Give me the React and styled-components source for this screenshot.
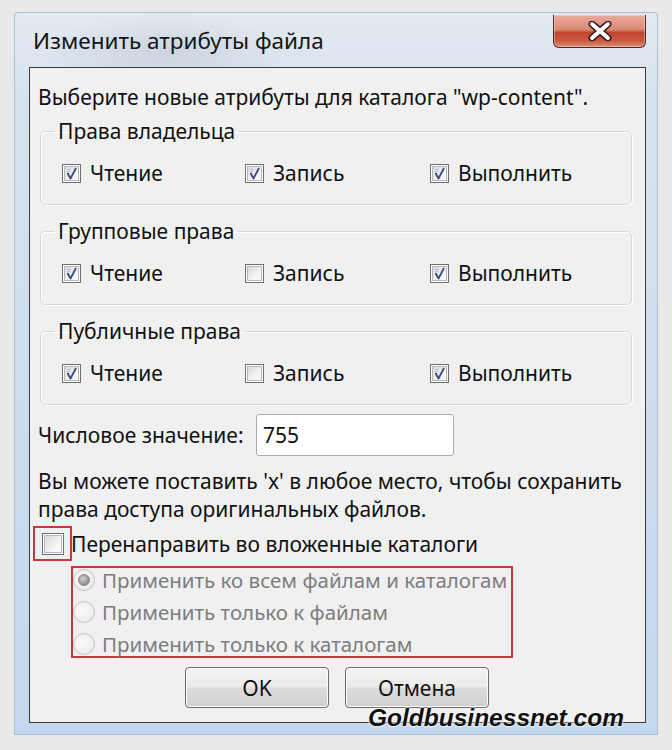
import React from "react";
import styled, {createGlobalStyle} from "styled-components";

const GlobalStyle = createGlobalStyle`
  body {
    margin: 0;
    background: #e9e9e9;
    font-family: "Noto Sans", "Open Sans", sans-serif;
    color: #111;
  }
`;

const Page = styled.div`
  width: 672px;
  height: 750px;
  padding: 12px 0 0 14px;
  box-sizing: border-box;
`;

const Window = styled.div`
  position: relative;
  width: 644px;
  height: 723px;
  box-sizing: border-box;
  border: 1px solid #aebfd1;
  border-radius: 4px 4px 0 0;
  padding-bottom: 11px;
  display: flex;
  flex-direction: column;
  background:
    radial-gradient(ellipse 120px 40px at 150px 40px, rgba(150, 160, 175, 0.25), transparent),
    linear-gradient(180deg, #e3e9f0 0%, #d6e2ee 12%, #c3d8ee 100%);
`;

const TitleBar = styled.div`
  height: 54px;
  display: flex;
  justify-content: space-between;
  align-items: flex-start;
`;

const Title = styled.div`
  padding: 14px 0 0 18px;
  font-size: 22.5px;
  line-height: 28px;
  color: #151515;
`;

const CloseButton = styled.div`
  margin: 2px 11px 0 0;
  width: 93px;
  height: 33px;
  box-sizing: border-box;
  border: 1px solid #4b2a26;
  border-top: none;
  border-radius: 0 0 6px 6px;
  display: flex;
  align-items: center;
  justify-content: center;
  background: linear-gradient(180deg, #e9ab9d 0%, #da8b77 45%, #c1452c 55%, #c9573f 80%, #dc8d75 100%);
  box-shadow: inset 0 0 0 1px rgba(255, 255, 255, 0.35);
`;

const Panel = styled.div`
  margin: 0 11px 0 14px;
  height: 656px;
  box-sizing: border-box;
  border: 1px solid #3b3b3b;
  background: #f0f0f0;
  display: flex;
  flex-direction: column;
  font-size: 21px;
`;

const Intro = styled.div`
  margin: 15px 0 0 8px;
  line-height: 28px;
`;

const Group = styled.fieldset`
  margin: ${p => p.$first ? "8px" : "14px"} 13px 0 10px;
  padding: 0 0 0 21px;
  border: 1px solid #d7d7d7;
  border-radius: 5px;
  box-shadow: inset 1px 1px 0 #fff, 1px 1px 0 #fff;
`;

const Legend = styled.legend`
  margin-left: -8px;
  padding: 0 4px;
  line-height: 24px;
  font-size: 21px;
`;

const Row = styled.div`
  margin: 18px 0 19px;
  height: 24px;
  display: grid;
  grid-template-columns: 183px 185px auto;
`;

const Option = styled.label`
  display: flex;
  align-items: center;
  gap: 9px;
  line-height: 24px;
`;

const Box = styled.span`
  width: 19px;
  height: 19px;
  flex: none;
  box-sizing: border-box;
  border: 1px solid #6f6f6f;
  padding: 1px;
  background: #fff;
  display: flex;

  & > span {
    flex: 1;
    display: flex;
    align-items: center;
    justify-content: center;
    border: 1px solid #b8b8b8;
    background: linear-gradient(135deg, #d9d9d9, #f7f7f7 70%);
  }
`;

const NumberRow = styled.div`
  margin: 9px 0 0 8px;
  height: 42px;
  display: grid;
  grid-template-columns: 218px 198px;
  align-items: center;
`;

const NumberInput = styled.div`
  height: 42px;
  box-sizing: border-box;
  border: 1px solid #a9abb2;
  border-radius: 3px;
  background: #fff;
  padding: 0 6px;
  line-height: 40px;
`;

const Hint = styled.div`
  margin: 11px 0 0 8px;
  line-height: 28px;
`;

const RedirectRow = styled.div`
  margin: 3px 0 0 3px;
  height: 35px;
  display: flex;
  align-items: center;
`;

const Marked = styled.div`
  width: 39px;
  height: 35px;
  box-sizing: border-box;
  border: 2px solid #c7393d;
  display: flex;
  align-items: center;
  justify-content: center;

  & > span {
    width: 22px;
    height: 22px;
  }
`;

const RedirectLabel = styled.span`
  margin-left: -1px;
  line-height: 28px;
`;

const RadioGroup = styled.div`
  margin: 5px 0 0 41px;
  width: 442px;
  height: 92px;
  box-sizing: border-box;
  border: 2px solid #c7393d;
  display: flex;
  flex-direction: column;
  gap: 8px;
`;

const RadioRow = styled.div`
  height: 24px;
  display: flex;
  align-items: center;
  gap: 7px;
  font-size: 20.5px;
  color: #7d7d7d;
  white-space: nowrap;
`;

const Radio = styled.span`
  width: 22px;
  height: 22px;
  flex: none;
  box-sizing: border-box;
  border-radius: 50%;
  border: 1px solid #c4c4c4;
  background: radial-gradient(circle at 40% 40%, #fbfbfb, #e6e6e6);
  display: flex;
  align-items: center;
  justify-content: center;

  &::after {
    content: "";
    width: 10px;
    height: 10px;
    border-radius: 50%;
    display: ${p => p.$on ? "block" : "none"};
    background: radial-gradient(circle at 40% 35%, #d0d0d0, #8f8f8f 70%);
    border: 1px solid #8a8a8a;
  }
`;

const Buttons = styled.div`
  margin: 9px 0 0 155px;
  display: flex;
  gap: 16px;
`;

const Button = styled.div`
  width: 144px;
  height: 41px;
  box-sizing: border-box;
  border: 1px solid #6d6d6d;
  border-radius: 4px;
  display: flex;
  align-items: center;
  justify-content: center;
  background: linear-gradient(180deg, #f3f3f3 0%, #ebebeb 48%, #dddddd 52%, #cfcfcf 100%);
  box-shadow: inset 0 0 0 1px #fcfcfc;
`;

const Watermark = styled.div`
  position: absolute;
  left: 353px;
  top: 690px;
  font-family: "Liberation Sans", Arial, sans-serif;
  font-weight: bold;
  font-style: italic;
  font-size: 24.5px;
  line-height: 30px;
  color: #111;
  text-shadow: 0 0 2px #fff, 0 0 2px #fff, 0 0 2px #fff;
`;

function Check({on}) {
    return (
        <Box>
            <span>
                {on && (
                    <svg width="13" height="13" viewBox="0 0 13 13">
                        <path d="M2 2.5 L6 2.5 M2 4.5 L5 4.5" stroke="#a8b0cf" strokeWidth="0.8"/>
                        <path d="M2.5 6 L5.5 11.5 L11 1" fill="none" stroke="#3c4a86" strokeWidth="1.8" strokeLinejoin="round"/>
                    </svg>
                )}
            </span>
        </Box>
    );
}

const groups = [
    {title: "Права владельца", values: [true, true, true]},
    {title: "Групповые права", values: [true, false, true]},
    {title: "Публичные права", values: [true, false, true]},
];

const labels = ["Чтение", "Запись", "Выполнить"];

export default function App() {
    return (
        <Page>
            <GlobalStyle/>
            <Window>
                <TitleBar>
                    <Title>Изменить атрибуты файла</Title>
                    <CloseButton>
                        <svg width="26" height="20" viewBox="0 0 26 20">
                            <path d="M5 3 L21 17 M21 3 L5 17" stroke="#3a1d1a" strokeWidth="7" strokeLinecap="round"/>
                            <path d="M5 3 L21 17 M21 3 L5 17" stroke="#fff" strokeWidth="4" strokeLinecap="round"/>
                        </svg>
                    </CloseButton>
                </TitleBar>
                <Panel>
                    <Intro>Выберите новые атрибуты для каталога "wp-content".</Intro>
                    {groups.map((g, i) => (
                        <Group key={g.title} $first={i === 0}>
                            <Legend>{g.title}</Legend>
                            <Row>
                                {labels.map((l, j) => (
                                    <Option key={l}>
                                        <Check on={g.values[j]}/>
                                        {l}
                                    </Option>
                                ))}
                            </Row>
                        </Group>
                    ))}
                    <NumberRow>
                        <span>Числовое значение:</span>
                        <NumberInput>755</NumberInput>
                    </NumberRow>
                    <Hint>
                        Вы можете поставить 'x' в любое место, чтобы сохранить<br/>
                        права доступа оригинальных файлов.
                    </Hint>
                    <RedirectRow>
                        <Marked><Check on={false}/></Marked>
                        <RedirectLabel>Перенаправить во вложенные каталоги</RedirectLabel>
                    </RedirectRow>
                    <RadioGroup>
                        <RadioRow><Radio $on/>Применить ко всем файлам и каталогам</RadioRow>
                        <RadioRow><Radio/>Применить только к файлам</RadioRow>
                        <RadioRow><Radio/>Применить только к каталогам</RadioRow>
                    </RadioGroup>
                    <Buttons>
                        <Button>OK</Button>
                        <Button>Отмена</Button>
                    </Buttons>
                </Panel>
                <Watermark>Goldbusinessnet.com</Watermark>
            </Window>
        </Page>
    );
}
